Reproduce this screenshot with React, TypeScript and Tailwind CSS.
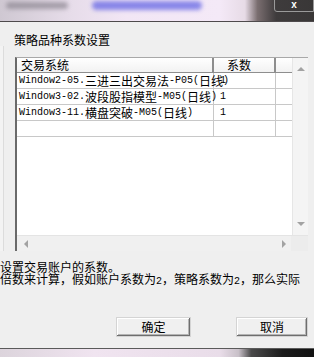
import React from 'react';

const rows = [
    ['Window2-05.三进三出交易法-P05(日线)', '1'],
    ['Window3-02.波段股指模型-M05(日线)', '1'],
    ['Window3-11.横盘突破-M05(日线)', '1'],
    ['', ''],
];

// ascii runs in a 6px-wide mono, cjk runs at 12px (like SimSun)
const Mixed = ({ text }: { text: string }) => {
    const parts = text.match(/[\x00-\x7f]+|[^\x00-\x7f]+/g) ?? [];
    return (
        <>
            {parts.map((p, i) =>
                /^[\x00-\x7f]/.test(p) ? (
                    <span key={i} className="font-['Liberation_Mono',monospace] text-[10px]">{p}</span>
                ) : (
                    <span key={i} className="font-['Noto_Sans_CJK_SC',sans-serif] text-[12px]">{p}</span>
                )
            )}
        </>
    );
};

const Arrow = ({ dir }: { dir: 'up' | 'down' | 'left' | 'right' }) => {
    const pts = {
        up: '0,5 4,1 8,5',
        down: '0,1 8,1 4,5',
        left: '5,0 5,8 1,4',
        right: '1,0 1,8 5,4',
    }[dir];
    const vertical = dir === 'up' || dir === 'down';
    return (
        <svg width={vertical ? 8 : 6} height={vertical ? 6 : 8} viewBox={vertical ? '0 0 8 6' : '0 0 6 8'}>
            <polygon points={pts} fill="#a2a2a2" />
        </svg>
    );
};

const Button = ({ label, w }: { label: string; w: string }) => (
    <div
        className={`${w} h-[20px] flex items-center justify-center bg-[#f0f0f0] border border-[#d4d4d4] shadow-[inset_-1px_-1px_#6e6e6e,inset_1px_1px_#ffffff,inset_-2px_-2px_#b4b4b4] text-[12px] leading-[12px] text-black font-['Noto_Sans_CJK_SC',sans-serif]`}
    >
        {label}
    </div>
);

const App = () => {
    return (
        <div className="w-[314px] h-[357px] overflow-hidden flex flex-col bg-[#efefef] text-black">
            {/* blurred window strip above the dialog */}
            <div className="h-[22px] shrink-0 flex bg-[linear-gradient(90deg,#cfc8d2_0%,#e6dce9_22%,#f2e6f5_40%,#f4e9f7_70%,#e7dbe6_78%,#7a6e70_82%,#3e3b3c_88%,#393737_100%)] border-b border-[#4e4a4c]">
                <div className="w-[70px] pt-[2px] pl-[6px]">
                    <div className="h-[7px] w-[62px] rounded-full bg-[#8b8590] blur-[2px] opacity-70" />
                </div>
                <div className="w-[130px] ml-[22px] pt-[1px]">
                    <div className="h-[9px] w-[110px] rounded-full bg-[#6f6fe6] blur-[2px] opacity-80" />
                </div>
                <div className="flex-1" />
                <div className="w-[40px] h-[13px] mt-[-1px] border border-[#9a9a9a] rounded-bl-[3px] flex items-start justify-center text-white text-[10px] leading-[9px] font-bold font-['Liberation_Sans',sans-serif]">
                    x
                </div>
            </div>

            <div className="pt-[12px] pl-[14px] h-[24px] shrink-0 text-[12px] leading-[12px] font-['Noto_Sans_CJK_SC',sans-serif]">
                策略品种系数设置
            </div>

            {/* list view */}
            <div className="flex shrink-0">
                <div className="w-[4px] h-[205px] border-r border-[#dcdcdc] bg-[#f3f3f3]" />
                <div className="ml-[11px] mt-[11px] w-[293px] h-[194px] border-l-2 border-[#6a6a6a] border-t border-t-[#a8a8a8] flex flex-col bg-white">
                    <div className="flex flex-1 min-h-0">
                        <div className="flex-1 flex flex-col">
                            <div className="h-[15px] flex bg-[linear-gradient(#ffffff,#f2f2f2)] border-b border-[#8e8e8e] text-[12px] leading-[12px] font-['Noto_Sans_CJK_SC',sans-serif]">
                                <div className="w-[197px] pl-[4px] flex items-center border-r-2 border-[#8e8e8e]">交易系统</div>
                                <div className="w-[62px] pl-[13px] flex items-center border-r-2 border-[#8e8e8e]">系数</div>
                                <div className="flex-1" />
                            </div>
                            {rows.map((r, i) => (
                                <div key={i} className="h-[16px] flex border-b border-[#c8c8c8] leading-[12px]">
                                    <div className="w-[197px] pl-[2px] flex items-center whitespace-nowrap border-r border-[#c8c8c8]">
                                        <Mixed text={r[0]} />
                                    </div>
                                    <div className="w-[62px] pl-[6px] flex items-center border-r border-[#c8c8c8]">
                                        <Mixed text={r[1]} />
                                    </div>
                                    <div className="flex-1" />
                                </div>
                            ))}
                        </div>
                        <div className="w-[16px] bg-[#f4f4f4] border-l border-[#e6e6e6] flex flex-col items-center justify-between py-[8px]">
                            <Arrow dir="up" />
                            <Arrow dir="down" />
                        </div>
                    </div>
                    <div className="h-[16px] flex bg-[#f0f0f0] border-t border-[#e4e4e4]">
                        <div className="flex-1 flex items-center justify-between pl-[6px] pr-[4px]">
                            <Arrow dir="left" />
                            <Arrow dir="right" />
                        </div>
                        <div className="w-[17px] bg-[#ececec]" />
                    </div>
                </div>
            </div>

            <div className="mt-[10px] text-[12px] leading-[12px] whitespace-nowrap shrink-0">
                <div className="h-[12px]"><Mixed text="设置交易账户的系数。" /></div>
                <div className="h-[12px]"><Mixed text="倍数来计算，假如账户系数为2，策略系数为2，那么实际" /></div>
            </div>

            <div className="mt-[32px] flex shrink-0">
                <div className="ml-[116px]">
                    <Button label="确定" w="w-[75px]" />
                </div>
                <div className="ml-[45px]">
                    <Button label="取消" w="w-[72px]" />
                </div>
            </div>

            <div className="flex-1" />
            <div className="h-[9px] shrink-0 border-t border-[#5a5a5a] bg-[linear-gradient(90deg,#dcd4dc_0%,#f0e4f0_30%,#e9dde9_70%,#c8c0c8_76%,#4a4a4a_80%,#1c1c1c_90%,#111_100%)]" />
        </div>
    );
};

export default App;
